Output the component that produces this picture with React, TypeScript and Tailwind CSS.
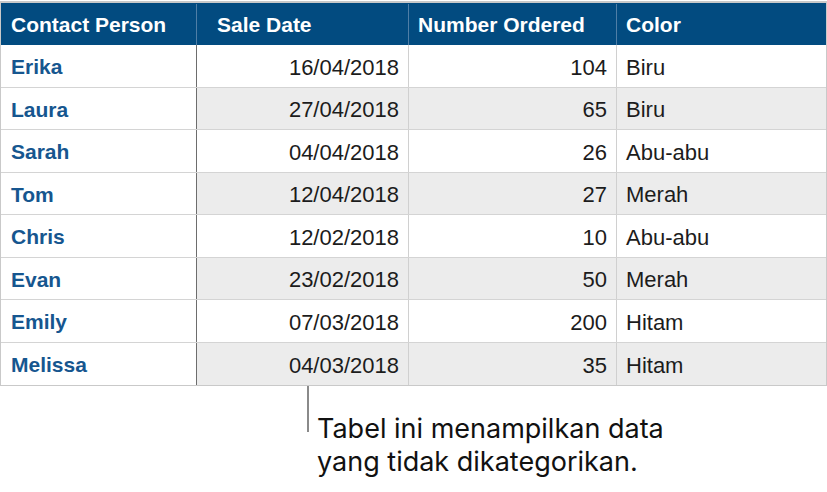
const rows = [
  { name: 'Erika', date: '16/04/2018', num: 104, color: 'Biru' },
  { name: 'Laura', date: '27/04/2018', num: 65, color: 'Biru' },
  { name: 'Sarah', date: '04/04/2018', num: 26, color: 'Abu-abu' },
  { name: 'Tom', date: '12/04/2018', num: 27, color: 'Merah' },
  { name: 'Chris', date: '12/02/2018', num: 10, color: 'Abu-abu' },
  { name: 'Evan', date: '23/02/2018', num: 50, color: 'Merah' },
  { name: 'Emily', date: '07/03/2018', num: 200, color: 'Hitam' },
  { name: 'Melissa', date: '04/03/2018', num: 35, color: 'Hitam' },
]

const helv = { fontFamily: '"Liberation Sans", Arial, sans-serif' }

export default function App() {
  return (
    <div className="w-[827px] h-[492px] bg-white overflow-hidden">
      <div className="mt-px w-[827px] border-t-2 border-l border-r border-b border-[#c9c9c9]" style={helv}>
        <div className="flex h-[42px] pt-px bg-[#024b80] text-white font-bold text-[21px]">
          <div className="w-[196px] flex items-center pl-[10px] border-r border-[#4f7ea6]">Contact Person</div>
          <div className="w-[212px] flex items-center pl-[20px] border-r border-[#4f7ea6]">Sale Date</div>
          <div className="w-[208px] flex items-center pl-[9px] border-r border-[#4f7ea6]">Number Ordered</div>
          <div className="flex-1 flex items-center pl-[9px]">Color</div>
        </div>
        {rows.map((r, i) => {
          const odd = i % 2 === 1
          const bg = odd ? 'bg-[#ececec]' : 'bg-white'
          const h = i % 2 === 0 ? 'h-[43px]' : 'h-[42px]'
          return (
            <div
              key={r.name}
              className={`flex ${h} text-[22px] text-[#1c1c1c] ${i < rows.length - 1 ? 'border-b border-[#d4d4d4]' : ''}`}
            >
              <div className="w-[196px] flex items-center pl-[10px] pt-[2px] font-bold text-[21px] text-[#16568f] bg-white border-r border-[#6d6d6d]">
                {r.name}
              </div>
              <div className={`w-[212px] flex items-center justify-end pr-[9px] pt-[2px] border-r border-[#d0d0d0] ${bg}`}>
                {r.date}
              </div>
              <div className={`w-[208px] flex items-center justify-end pr-[9px] pt-[2px] border-r border-[#d0d0d0] ${bg}`}>
                {r.num}
              </div>
              <div className={`flex-1 flex items-center pl-[9px] pt-[2px] ${bg}`}>{r.color}</div>
            </div>
          )
        })}
      </div>
      <div className="flex ml-[307px]">
        <div className="w-[2px] h-[46px] bg-[#8a8a8a]" />
        <div
          className="ml-[8px] mt-[26px] text-[27px] leading-[33px] text-[#111]"
          style={{ fontFamily: 'Inter, "Noto Sans", sans-serif' }}
        >
          Tabel ini menampilkan data
          <br />
          yang tidak dikategorikan.
        </div>
      </div>
    </div>
  )
}
